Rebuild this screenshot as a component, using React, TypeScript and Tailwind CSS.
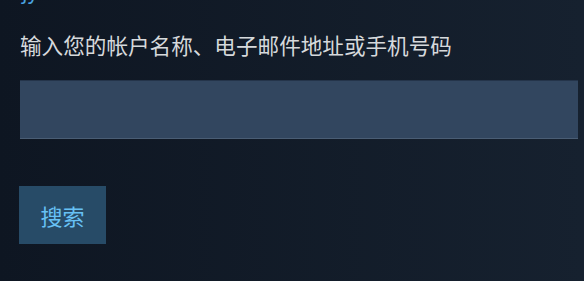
export default function App() {
  return (
    <div
      className="w-[584px] h-[281px] overflow-hidden bg-gradient-to-r from-[#0e1622] to-[#16212f] px-5"
      style={{ fontFamily: '"Noto Sans CJK SC", "Noto Sans", sans-serif' }}
    >
      {/* cut-off link line above */}
      <div className="-mt-[21px] h-[23px] text-[20px] leading-[23px] text-[#4aa3e0] pl-[2px]">jy</div>

      <div className="mt-[31px] text-[21.6px] leading-[24px] text-[#d6d9dc]">
        输入您的帐户名称、电子邮件地址或手机号码
      </div>

      <input
        type="text"
        className="mt-[23px] block w-[558px] h-[59px] bg-[#32465f] border-t border-t-[#24344a] border-b border-b-[#4a5d74] outline-none"
      />

      <button className="mt-[47px] h-[58px] w-[87px] -ml-px bg-[#274b67] text-[#67c1f5] text-[22px] leading-none">
        搜索
      </button>
    </div>
  );
}
